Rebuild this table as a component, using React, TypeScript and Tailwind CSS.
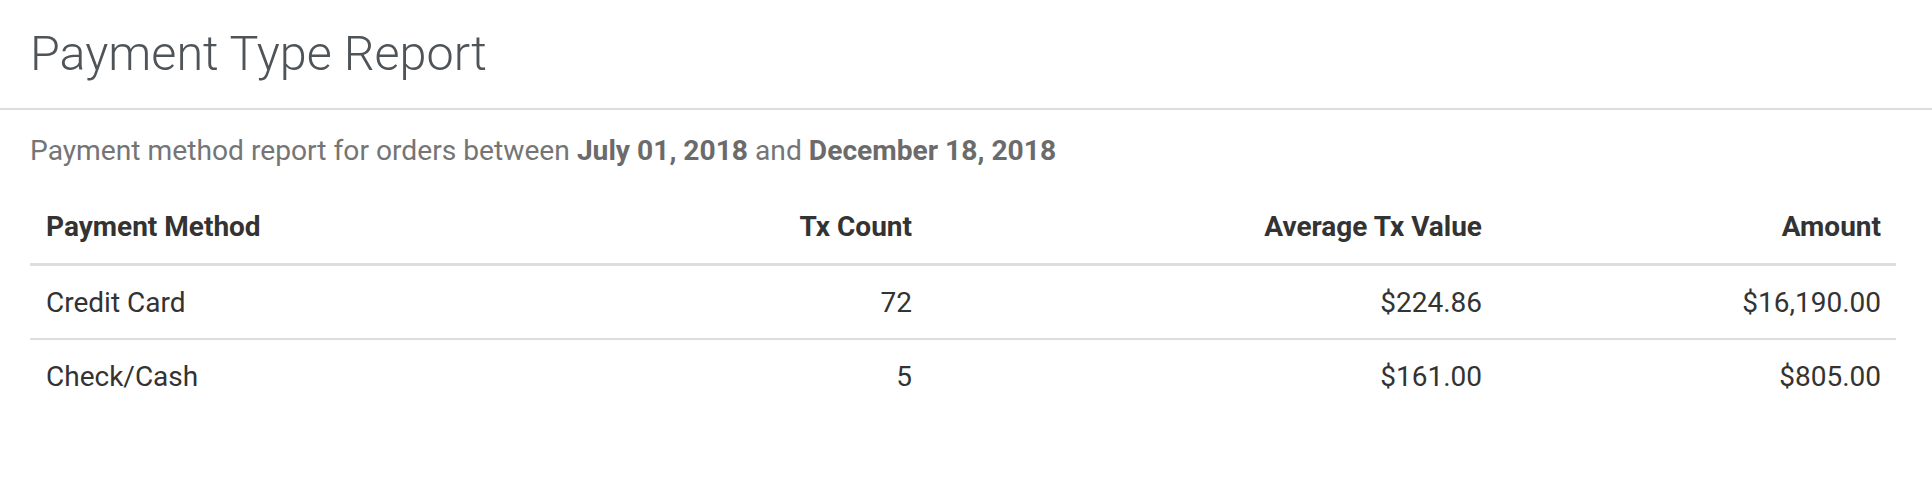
const rows = [
  { method: "Credit Card", count: "72", avg: "$224.86", amount: "$16,190.00" },
  { method: "Check/Cash", count: "5", avg: "$161.00", amount: "$805.00" },
];

export default function App() {
  return (
    <div className="min-h-[480px] bg-white font-['Roboto',sans-serif]">
      {/* Page title */}
      <div className="border-b-2 border-[#dddddd] pl-[30px] pt-[26px] pb-[26px]">
        <h1 className="text-[48.5px] leading-[56px] font-light text-[#4f5459]">Payment Type Report</h1>
      </div>

      <div className="pl-[30px] pr-[36px]">
        <p className="mt-[24px] text-[28.2px] leading-[33px] text-[#757575]">
          Payment method report for orders between <strong className="font-bold text-[#6b6b6b]">July 01, 2018</strong> and{" "}
          <strong className="font-bold text-[#6b6b6b]">December 18, 2018</strong>
        </p>

        <table className="mt-[23px] w-full border-collapse text-[28px] leading-[33px] text-[#333333]">
          <thead>
            <tr className="border-b-[3px] border-[#dddddd]">
              <th className="w-[448px] px-[16px] py-[20px] text-left font-bold">Payment Method</th>
              <th className="w-[448px] pl-[16px] pr-[14px] py-[20px] text-right font-bold">Tx Count</th>
              <th className="w-[570px] pl-[16px] pr-[14px] py-[20px] text-right font-bold">Average Tx Value</th>
              <th className="pl-[16px] pr-[15px] py-[20px] text-right font-bold">Amount</th>
            </tr>
          </thead>
          <tbody>
            {rows.map((row, i) => (
              <tr key={row.method} className={i > 0 ? "border-t-2 border-[#dddddd]" : ""}>
                <td className="px-[16px] pt-[20px] pb-[19px] text-left">{row.method}</td>
                <td className="pl-[16px] pr-[14px] pt-[20px] pb-[19px] text-right">{row.count}</td>
                <td className="pl-[16px] pr-[14px] pt-[20px] pb-[19px] text-right">{row.avg}</td>
                <td className="pl-[16px] pr-[15px] pt-[20px] pb-[19px] text-right">{row.amount}</td>
              </tr>
            ))}
          </tbody>
        </table>
      </div>
    </div>
  );
}
